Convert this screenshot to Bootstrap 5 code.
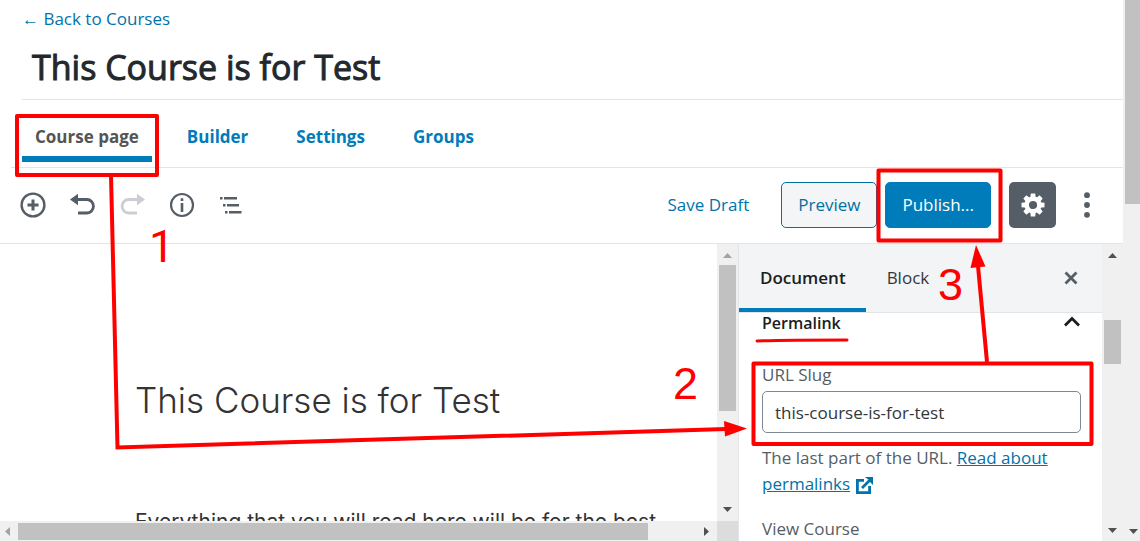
<!DOCTYPE html>
<html lang="en">
<head>
<meta charset="utf-8">
<meta name="viewport" content="width=device-width, initial-scale=1">
<title>This Course is for Test</title>
<link href="https://cdn.jsdelivr.net/npm/bootstrap@5.3.0/dist/css/bootstrap.min.css" rel="stylesheet">
<style>
  :root { --wp-blue: #007cba; --line: #e2e4e7; --slate: #555d66; }
  body { font-family: "Open Sans", "Noto Sans", sans-serif; font-size: 17px; line-height: 26px; color: #23282d; }
  a { color: #0073aa; }
  .line-b { border-bottom: 1px solid var(--line); }
  .page-title { font-size: 34px; line-height: 44px; font-weight: 400; -webkit-text-stroke: 1px currentColor; padding-left: 10px; margin-top: 13px; }
  .title-block { margin-left: 22px; height: 100px; padding-top: 6px; }
  .course-tabs { margin-left: 11px; padding-left: 11px; height: 68px; padding-top: 24px; }
  .course-tabs .nav-link { padding: 0 13px; font-weight: 700; line-height: 26px; color: var(--wp-blue); }
  .course-tabs .nav-item + .nav-item { margin-left: 22px; }
  .course-tabs .nav-link.active { color: #555; padding-bottom: 6px; border-bottom: 6px solid var(--wp-blue); }
  .tool-row { height: 76px; padding: 0 23px 2px 20px; }
  .tool-btn { border: 0; background: none; padding: 0; line-height: 0; color: var(--slate); }
  .tool-btn:disabled { color: #ccced1; }
  .wp-btn { --bs-btn-border-radius: 5px; --bs-btn-padding-x: 16px; --bs-btn-padding-y: 8px; --bs-btn-font-size: 17px; --bs-btn-line-height: 28px; }
  .btn-preview { background: #f3f5f6; border-color: #0071a1; color: #0071a1; }
  .btn-publish { background: var(--wp-blue); border-color: var(--wp-blue); color: #fff; }
  .btn-gear { width: 47px; height: 46px; margin: 0 18px; background: var(--slate); border: 0; border-radius: 5px; padding: 0; line-height: 0; color: #fff; }
  .track { background: #f0f0f0; }
  .track-v { width: 21px; }
  .track-h { height: 20px; }
  .thumb { background: #c1c1c1; }
  .post-body { font-family: Inter, "Open Sans", sans-serif; color: #333; padding: 128px 20px 0 135px; }
  .post-title { font-size: 35px; line-height: 56px; font-weight: 300; }
  .post-text { font-size: 21px; line-height: 28px; margin-top: 80px; white-space: nowrap; }
  .settings-panel { width: 364px; border-left: 1px solid var(--line); color: var(--slate); }
  .panel-tabs { height: 69px; background: #f3f4f5; }
  .panel-tabs .nav-link { padding: 0 20px 0 21px; line-height: 68px; color: #33383d; }
  .panel-tabs .nav-link.active { color: #191e23; font-weight: 600; box-shadow: inset 0 -4px 0 var(--wp-blue); }
  .panel-body { padding: 0 21px 0 23px; }
  .panel-toggle { color: #191e23; font-size: 16px; font-weight: 600; line-height: 20px; }
  .slug-label { margin-top: 29px; }
  .slug-input { height: 42px; margin-top: 3px; border: 1px solid #7e8993; border-radius: 5px; padding: 0 12px; font-size: 17px; color: #32373c; }
  .slug-help { margin: 12px 0 19px; }
  .notes { position: absolute; left: 0; top: 0; pointer-events: none; font-family: "Liberation Sans", sans-serif; font-size: 45px; }
</style>
</head>
<body class="bg-white overflow-hidden">
<div class="d-flex vh-100 position-relative">
  <div class="d-flex flex-column flex-grow-1 overflow-hidden">
    <header class="title-block line-b flex-shrink-0">
      <a href="#" class="text-decoration-none d-block">← Back to Courses</a>
      <h1 class="page-title mb-0">This Course is for Test</h1>
    </header>
    <ul class="nav course-tabs line-b flex-shrink-0 flex-nowrap align-items-start">
      <li class="nav-item"><a class="nav-link active" href="#">Course page</a></li>
      <li class="nav-item"><a class="nav-link" href="#">Builder</a></li>
      <li class="nav-item"><a class="nav-link" href="#">Settings</a></li>
      <li class="nav-item"><a class="nav-link" href="#">Groups</a></li>
    </ul>
    <div class="tool-row line-b d-flex align-items-center flex-shrink-0">
      <div class="d-flex gap-4">
        <button class="tool-btn" aria-label="Add block"><svg width="26" height="26" viewBox="0 0 26 26" fill="none" stroke="currentColor"><circle cx="13" cy="13" r="11.4" stroke-width="2.4"/><path d="M13 7.500v11M7.500 13h11" stroke-width="3"/></svg></button>
        <button class="tool-btn" aria-label="Undo"><svg width="26" height="26" viewBox="0 0 26 26"><path d="M8 7.500h9a6 6.300 0 0 1 0 13.500H8" fill="none" stroke="currentColor" stroke-width="2.800"/><path d="M0 7.500 8 1.800v11.400z" fill="currentColor"/></svg></button>
        <button class="tool-btn" aria-label="Redo" disabled><svg width="26" height="26" viewBox="0 0 26 26"><path d="M17 7.500H8.500a6 6.300 0 0 0 0 13.500H17" fill="none" stroke="currentColor" stroke-width="2.800"/><path d="M25 7.500 17 1.800v11.400z" fill="currentColor"/></svg></button>
        <button class="tool-btn" aria-label="Content structure"><svg width="26" height="26" viewBox="0 0 26 26"><circle cx="12" cy="13" r="11" fill="none" stroke="currentColor" stroke-width="2.200"/><path d="M10.700 11h2.600v9h-2.600zM10.700 6.200h2.600v2.700h-2.600z" fill="currentColor"/></svg></button>
        <button class="tool-btn" aria-label="Block navigation"><svg width="26" height="26" viewBox="0 0 26 26" fill="currentColor"><path d="M0 5h2.500v2.400H0zM4 5h13v2.400H4zM3 12h2.500v2.400H3zM7 12h12v2.400H7zM5 19h2.500v2.400H5zM9 19h12.500v2.400H9z"/></svg></button>
      </div>
      <div class="d-flex align-items-center ms-auto">
        <a href="#" class="text-decoration-none me-4 pe-2">Save Draft</a>
        <button class="btn wp-btn btn-preview me-2">Preview</button>
        <button class="btn wp-btn btn-publish">Publish...</button>
        <button class="btn-gear" aria-label="Settings"><svg width="24" height="24" viewBox="0 0 24 24"><g fill="currentColor"><path id="tooth" d="M9.800.5h4.400l.6 5H9.200zM9.800 23.500h4.400l.6-5H9.200z"/><use href="#tooth" transform="rotate(45 12 12)"/><use href="#tooth" transform="rotate(90 12 12)"/><use href="#tooth" transform="rotate(135 12 12)"/></g><circle cx="12" cy="12" r="6.300" fill="none" stroke="currentColor" stroke-width="4.400"/></svg></button>
        <button class="tool-btn" aria-label="More tools"><svg width="26" height="26" viewBox="0 0 26 26" fill="currentColor"><circle cx="13" cy="3.200" r="2.900"/><circle cx="13" cy="13" r="2.900"/><circle cx="13" cy="22.800" r="2.900"/></svg></button>
      </div>
    </div>

    <div class="d-flex flex-grow-1 overflow-hidden">
      <main class="d-flex flex-column flex-grow-1 overflow-hidden">
        <div class="post-body flex-grow-1 overflow-hidden">
          <h2 class="post-title mb-0">This Course is for Test</h2>
          <p class="post-text mb-0">Everything that you will read here will be for the best</p>
        </div>
        <div class="track track-h d-flex align-items-center flex-shrink-0">
          <svg width="18" height="20"><path d="M10 6v9l-5-4.500z" fill="#a3a3a3"/></svg>
          <div class="thumb flex-grow-1" style="height:17px"></div>
          <svg width="69" height="20"><path d="M56 6v9l5-4.500z" fill="#505050"/></svg>
        </div>
      </main>
      <div class="d-flex flex-column flex-shrink-0 track-v">
        <div class="track d-flex flex-column flex-grow-1">
          <svg width="21" height="21"><path d="M6 14h9l-4.500-5z" fill="#a3a3a3"/></svg>
          <div class="thumb flex-grow-1 mx-auto" style="width:17px"></div>
          <svg width="21" height="110"><path d="M6 96h9l-4.500 5z" fill="#505050"/></svg>
        </div>
        <div class="track-h" style="background:#dcdcdc"></div>
      </div>

      <aside class="settings-panel flex-shrink-0 overflow-hidden">
        <div class="panel-tabs line-b d-flex align-items-center">
          <ul class="nav">
            <li class="nav-item"><a class="nav-link active" href="#">Document</a></li>
            <li class="nav-item"><a class="nav-link" href="#">Block</a></li>
          </ul>
          <button class="tool-btn ms-auto me-4" aria-label="Close settings"><svg width="14" height="14" viewBox="0 0 14 14"><path d="M1.500 1.500l11 11M12.500 1.500l-11 11" stroke="currentColor" stroke-width="2.800"/></svg></button>
        </div>
        <div class="panel-body">
          <button class="tool-btn panel-toggle d-flex w-100 justify-content-between">Permalink
            <svg width="18" height="18" viewBox="0 0 18 18"><path d="M2 12.500l7-7 7 7" fill="none" stroke="currentColor" stroke-width="2.800"/></svg>
          </button>
          <label for="slug" class="d-block slug-label">URL Slug</label>
          <input id="slug" type="text" class="slug-input w-100 d-block" value="this-course-is-for-test">
          <p class="slug-help">The last part of the URL. <a href="#">Read about permalinks</a>
            <svg width="19" height="19" viewBox="0 0 19 19" fill="none" stroke="#0073aa" stroke-width="2.800"><path d="M9 4.400H2.400v12.200h12.200V10M7 12l8.500-8.500"/><path d="M10 1h8v8l-2.500-2.500-2-3-1-.500z" fill="#0073aa" stroke="none"/></svg>
          </p>
          <p class="mb-0">View Course</p>
        </div>
      </aside>
      <div class="track track-v d-flex flex-column flex-shrink-0">
        <svg width="21" height="76"><path d="M6 14h9l-4.500-5z" fill="#505050"/></svg>
        <div class="thumb mx-auto" style="width:17px;height:44px"></div>
        <svg class="mt-auto" width="21" height="20"><path d="M6 7h9l-4.500 5z" fill="#505050"/></svg>
      </div>
    </div>
  </div>
  <div class="track d-flex flex-column flex-shrink-0" style="width:17px">
    <div class="thumb ms-auto" style="width:15px;height:204px"></div>
    <svg class="mt-auto" width="17" height="20"><path d="M6 8h9l-4.500 5z" fill="#505050"/></svg>
  </div>

  <!-- tutorial markers -->
  <svg class="notes" width="1123" height="541" viewBox="0 0 1123 541" fill="none" stroke="#f00" stroke-width="4">
    <g stroke-linejoin="round">
      <rect x="17" y="116" width="140" height="59"/>
      <rect x="878.500" y="170.500" width="122" height="70"/>
      <rect x="753.500" y="363.500" width="338" height="80.500"/>
    </g>
    <path d="M111 175l6.500 272.500L726 429"/>
    <path d="M987 362l-9-96"/>
    <path d="M757 341c25-1 60-1 90-1" stroke-linecap="round" stroke-width="3"/>
    <g fill="#f00" stroke="none">
      <path d="M724 421l23 7.500-22 8zM976 245l-5.500 23 15-1.500z"/>
      <text x="149" y="262" font-family="Roboto, sans-serif">1</text>
      <text x="673" y="399">2</text>
      <text x="938" y="300">3</text>
    </g>
  </svg>
</div>
<script src="https://cdn.jsdelivr.net/npm/bootstrap@5.3.0/dist/js/bootstrap.bundle.min.js"></script>
</body>
</html>
